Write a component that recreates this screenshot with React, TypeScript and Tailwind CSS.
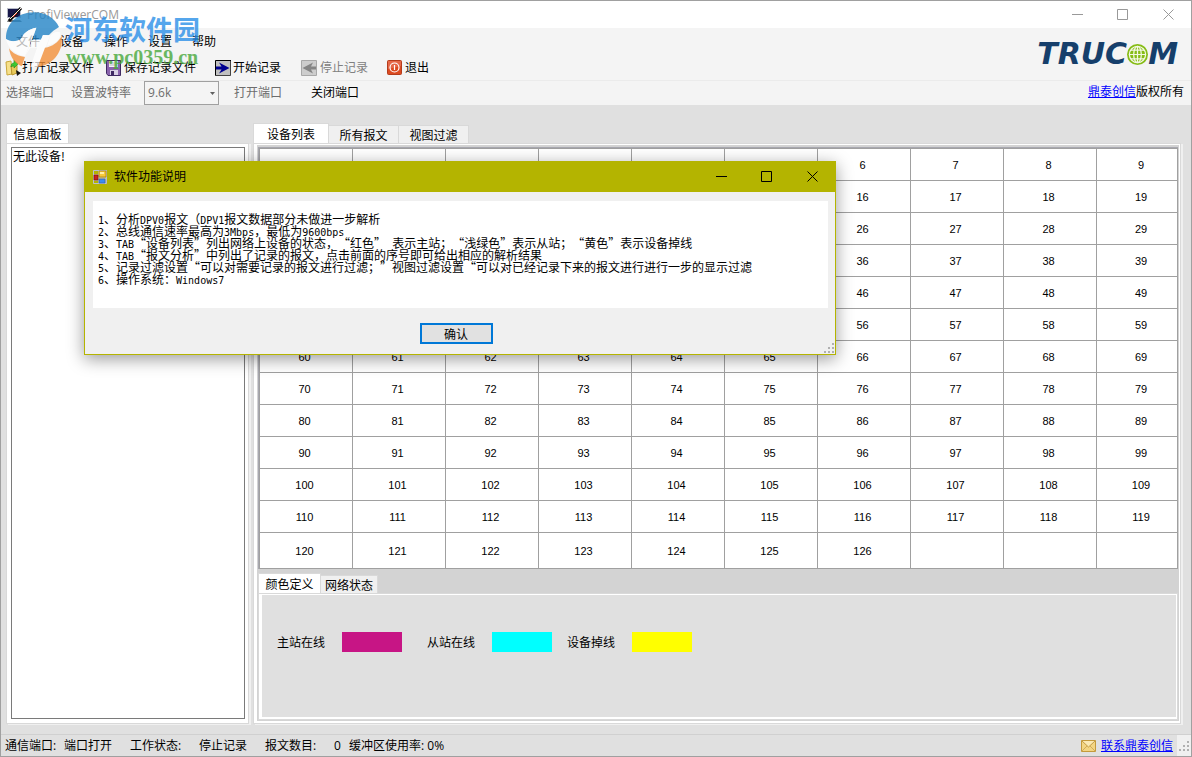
import React, { useState } from 'react';

const UI_FONT = "font-['Open_Sans','Noto_Sans_CJK_SC',sans-serif]";
const SONG_FONT = "font-['Noto_Sans_CJK_SC',sans-serif]";

const helpLines = [
  '1、分析DPV0报文（DPV1报文数据部分未做进一步解析',
  '2、总线通信速率最高为3Mbps，最低为9600bps',
  '3、TAB“设备列表”列出网络上设备的状态，“红色” 表示主站；“浅绿色”表示从站；“黄色”表示设备掉线',
  '4、TAB“报文分析”中列出了记录的报文，点击前面的序号即可给出相应的解析结果',
  '5、记录过滤设置“可以对需要记录的报文进行过滤；”视图过滤设置“可以对已经记录下来的报文进行进行一步的显示过滤',
  '6、操作系统：Windows7',
];

const legend = [
  { label: '主站在线', color: 'bg-[#c71585]', gap: 'mr-[25px]' },
  { label: '从站在线', color: 'bg-[#00ffff]', gap: 'mr-[15px]' },
  { label: '设备掉线', color: 'bg-[#ffff00]', gap: '' },
];

// Latin runs take half the width of a Chinese character
function MixedText({ text }: { text: string }) {
  return (
    <>
      {text.split(/([\x20-\x7e]+)/).map((part, i) =>
        i % 2 ? <span key={i} className="font-['DejaVu_Sans_Mono',monospace] text-[10px]">{part}</span> : part
      )}
    </>
  );
}

function WindowButtons({ className }: { className: string }) {
  return (
    <div className={`flex ${className}`}>
      <button aria-label="最小化" className="w-[46px] h-7 flex items-center justify-center">
        <svg width="11" height="11" stroke="currentColor" fill="none"><path d="M0 5.5h11" /></svg>
      </button>
      <button aria-label="最大化" className="w-[45px] h-7 flex items-center justify-center">
        <svg width="11" height="11" stroke="currentColor" fill="none"><path d="M.5 .5h10v10h-10z" /></svg>
      </button>
      <button aria-label="关闭" className="w-[46px] h-7 flex items-center justify-center">
        <svg width="11" height="11" stroke="currentColor" fill="none"><path d="M.5 .5l10 10M10.5 .5l-10 10" /></svg>
      </button>
    </div>
  );
}

function AppIcon() {
  return (
    <svg width="16" height="16" viewBox="0 0 16 16">
      <path d="M0 1h14v10H0z" fill="#b8bcc8" />
      <path d="M1 2h12v8H1z" fill="#18184a" />
      <path d="M1 13h12l2 2H0z" fill="#777" />
      <path d="M2 14L14 1" stroke="#111" strokeWidth="3" />
      <path d="M3 12L14 1" stroke="#f3e8e0" strokeWidth="1" />
      <path d="M6 10l4-4" stroke="#e03020" strokeWidth="1" />
    </svg>
  );
}

function OpenIcon() {
  return (
    <svg width="16" height="16" viewBox="0 0 16 16">
      <path d="M1 2l5-1 1 13-5 1z" fill="#f6e08a" stroke="#c9a83c" />
      <path d="M6 6l6-1v8l-5 2z" fill="#e8c95a" stroke="#b8942c" />
      <path d="M6 7c0-3 1-4 3-4V0l4 4-4 4V6c-1 0-2 0-3 1z" fill="#3cc832" stroke="#1c8a1c" strokeWidth=".6" />
      <path d="M11 10l5 3-4 3z" fill="#111" />
    </svg>
  );
}

function SaveIcon() {
  return (
    <svg width="16" height="16" viewBox="0 0 16 16">
      <path d="M.5 .5h14v15H2l-1.500-2z" fill="#8a63ad" stroke="#3f2a63" />
      <path d="M3 1h9v6H3z" fill="#f4f4f8" />
      <path d="M3.500 3h8M3.500 5h8" stroke="#b4b4c4" />
      <path d="M4 10h8v5H4z" fill="#d8d0e4" />
      <path d="M5 11h3v4H5z" fill="#3f2a63" />
    </svg>
  );
}

function StartIcon() {
  return (
    <svg width="16" height="16" viewBox="0 0 16 16">
      <path d="M0 0h16v16H0z" fill="#c0c0c0" />
      <path d="M.5 16V.5H16" stroke="#000" fill="none" />
      <path d="M0 15.500h15.500V1" stroke="#444" fill="none" />
      <path d="M4 2.500L14.500 8 4 13.500 6.500 9.500H1v-3h5.500z" fill="#000090" />
    </svg>
  );
}

function StopIcon() {
  return (
    <svg width="16" height="16" viewBox="0 0 16 16">
      <path d="M.5 .5h15v15H.5z" fill="#cdcdcd" stroke="#a8a8a8" />
      <path d="M12 2.500L1.500 8 12 13.500 10 9.500h5v-3h-5z" fill="#858585" />
    </svg>
  );
}

function ExitIcon() {
  return (
    <svg width="16" height="16" viewBox="0 0 16 16">
      <rect x=".5" y=".5" width="14" height="14" rx="1" fill="#dc4a20" stroke="#b43c1c" />
      <path d="M1 1h13v5L1 9z" fill="#e8755a" opacity=".7" />
      <circle cx="7.500" cy="7.500" r="4.500" fill="none" stroke="#fff" strokeWidth="1.200" />
      <path d="M7.500 5v5" stroke="#fff" strokeWidth="1.200" />
    </svg>
  );
}

function FormIcon() {
  return (
    <svg width="14" height="14" viewBox="0 0 14 14">
      <path d="M.5 .5h13v13H.5z" fill="#c8c49a" stroke="#b9bdd0" />
      <path d="M1 1h4v3H1zM1 11h4v2H1z" fill="#b4b400" />
      <path d="M6 1h7v6H6z" fill="#f7c93c" stroke="#a87800" strokeWidth=".7" />
      <path d="M7 2h4v2H7z" fill="#fff0a8" />
      <path d="M1 5h4v5H1z" fill="#c8241c" stroke="#7a1010" strokeWidth=".7" />
      <path d="M6 9h6v4H6z" fill="#3c8cf0" stroke="#3060b0" strokeWidth=".7" />
    </svg>
  );
}

function MailIcon() {
  return (
    <svg width="16" height="12" viewBox="0 0 16 12">
      <path d="M.5 .5h14v11H.5z" fill="#f3d583" stroke="#c49a3c" />
      <path d="M1 1l6.500 6L14 1" fill="#fbe9b4" stroke="#b58a30" strokeWidth=".8" />
      <path d="M1 11l5-5M14 11L9 6" stroke="#c8a04c" strokeWidth=".8" />
    </svg>
  );
}

function Grip() {
  return (
    <svg width="11" height="11" viewBox="0 0 11 11" fill="#b0b0b0">
      <path d="M8 0h2v2H8zM4 4h2v2H4zM8 4h2v2H8zM0 8h2v2H0zM4 8h2v2H4zM8 8h2v2H8z" />
    </svg>
  );
}

function Globe() {
  return (
    <svg width="21" height="21" viewBox="0 0 22 22">
      <circle cx="11" cy="11" r="11" fill="#86bc16" />
      <g fill="none" stroke="#f4f8e4" strokeWidth="1.300">
        <ellipse cx="11" cy="11" rx="4" ry="8.500" />
        <circle cx="11" cy="11" r="8.500" />
        <path d="M11 2.500v17M2 11h18M4 6.500h14M4 15.500h14" />
      </g>
    </svg>
  );
}

function Watermark() {
  return (
    <div className="absolute left-1 top-2.5 flex gap-0.5 pointer-events-none opacity-80">
      <svg width="58" height="58" viewBox="0 0 174 174">
        <path d="M3 84C2 38 38 4 86 4c36 0 64 18 76 44-10 6-22 14-32 26l-16-2-6 14H82l12-36c-22 4-40 16-46 34C34 92 18 94 3 84z" fill="#2484c6" />
        <path d="M3 84c15 10 31 8 45 0 6-18 24-30 46-34L60 136C30 130 8 112 3 84z" fill="#fff" opacity=".9" />
        <path d="M12 112c12 16 28 24 48 26l-10 28c-20-8-34-26-38-54z" fill="#f3913a" />
        <path d="M82 86h26l6-14h22l-36 96H76l20-58H76l-16 26z" fill="#fff" opacity=".9" />
        <path d="M170 74c6 46-24 88-72 94l22-58c22-4 40-16 50-36z" fill="#f3913a" />
        <path d="M126 104l10-30c8-10 20-14 30-10 2 20-14 36-40 40z" fill="#fff" opacity=".9" />
      </svg>
      <div>
        <p className="font-['Noto_Sans_CJK_SC',sans-serif] font-bold text-[27px] leading-9 text-[#2b90e8]">河东软件园</p>
        <p className="pl-px font-['Liberation_Serif',serif] font-bold text-[20px] leading-5 text-[#48a83c]">www.pc0359.cn</p>
      </div>
    </div>
  );
}

function DeviceTable() {
  return (
    <table className="w-full table-fixed border-collapse bg-white font-['Liberation_Sans',sans-serif] text-[11px] leading-3 text-center">
      <colgroup>
        {Array.from({ length: 9 }, (_, c) => <col key={c} className="w-[93px]" />)}
        <col />
      </colgroup>
      <tbody>
        {Array.from({ length: 13 }, (_, r) => (
          <tr key={r} className="h-8 last:h-9">
            {Array.from({ length: 10 }, (_, c) => {
              const address = r * 10 + c;
              return (
                <td key={c} className="border border-[#a0a0a0] p-0 pr-[3px] last:pr-0 last:pl-2">{address <= 126 ? address : ''}</td>
              );
            })}
          </tr>
        ))}
      </tbody>
    </table>
  );
}

function HelpDialog({ onClose }: { onClose: () => void }) {
  return (
    <div role="dialog" aria-labelledby="help-title" className="absolute left-[83px] top-40 w-[752px] bg-[#f0f0f0] border border-[#b4b400] shadow-[0_4px_16px_rgba(0,0,0,0.4)]">
      <div className="h-[30px] bg-[#b4b400] pl-2 flex items-center">
        <FormIcon />
        <h2 id="help-title" className={`ml-[7px] flex-1 text-xs ${UI_FONT}`}>软件功能说明</h2>
        <WindowButtons className="text-black -mt-0.5" />
      </div>
      <div className="mt-[9px] ml-2 mr-[7px] h-[107px] bg-white pl-[5px] pt-3 text-xs leading-3 whitespace-pre [text-spacing-trim:space-all]">
        {helpLines.map(line => <p key={line} className="h-3"><MixedText text={line} /></p>)}
      </div>
      <div className="h-[46px] pt-[15px] flex justify-center relative">
        <button onClick={onClose} className="w-[73px] h-[21px] mr-2 bg-[#e1e1e1] border-2 border-[#0078d7] text-xs leading-3">确认</button>
        <div className="absolute right-0 bottom-0"><Grip /></div>
      </div>
    </div>
  );
}

export default function App() {
  const [showHelp, setShowHelp] = useState(true);

  return (
    <div lang="zh-CN" className={`relative min-h-screen flex flex-col overflow-hidden bg-[#e0e0e0] border border-[#a0a0a0] text-black text-xs ${SONG_FONT}`}>
      <header className={UI_FONT}>
        <div className="h-[27px] bg-white flex items-center pl-1.5">
          <AppIcon />
          <h1 className="ml-1 flex-1 text-[#999999]">ProfiViewerCOM</h1>
          <WindowButtons className="text-[#999999]" />
        </div>
        <div className="bg-[#f4f4f4] flex justify-between">
          <div>
            <nav className="h-[27px] pt-px pl-[15px] flex items-center gap-5">
              {['文件', '设备', '操作', '设置', '帮助'].map(item => <button key={item}>{item}</button>)}
            </nav>
            <div className="h-[25px] pl-1 flex items-center">
              <button className="flex items-center gap-px mr-3"><OpenIcon />打开记录文件</button>
              <button className="flex items-center gap-0.5 mr-[19px]"><SaveIcon />保存记录文件</button>
              <button className="flex items-center gap-0.5 mr-5"><StartIcon />开始记录</button>
              <button disabled className="flex items-center gap-[3px] mr-[19px] text-[#808080]"><StopIcon />停止记录</button>
              <button className="flex items-center gap-0.5"><ExitIcon />退出</button>
            </div>
          </div>
          <div className="flex items-center mr-[13px] font-['DejaVu_Sans',sans-serif] font-bold italic text-[30px] leading-7 text-[#163f6b]">
            TRUC<Globe />M
          </div>
        </div>
        <div className="h-[25px] bg-[#f4f4f4] border-t border-[#ebebeb] pl-[5px] pr-[7px] flex items-center text-[#6d6d6d]">
          <span>选择端口</span>
          <label htmlFor="baud" className="ml-[17px]">设置波特率</label>
          <div className="relative ml-[13px]">
            <select id="baud" disabled defaultValue="9.6k" className="block appearance-none w-[75px] h-6 border border-[#a0a0a0] bg-[#f4f4f4] pl-[3px]">
              <option>9.6k</option>
            </select>
            <svg className="absolute right-1 top-[11px]" width="5" height="3" fill="#606060"><path d="M0 0h5L2.500 3z" /></svg>
          </div>
          <button disabled className="ml-[15px]">打开端口</button>
          <button className="ml-[29px] text-black">关闭端口</button>
          <p className={`ml-auto -mt-1 text-black ${SONG_FONT}`}><a href="#" className="text-[#0000ff] underline">鼎泰创信</a>版权所有</p>
        </div>
      </header>

      <main className="flex-1 flex gap-1 pt-[18px] pl-[5px] pr-2 pb-2.5">
        <section className="w-[243px] flex flex-col">
          <div className="flex">
            <label htmlFor="info" className="w-[63px] h-5 bg-white border border-b-0 border-[#d9d9d9] flex items-center justify-center leading-3">信息面板</label>
          </div>
          <div className="flex-1 flex bg-white border border-[#d9d9d9] shadow-[2px_1px_0_#f0f0f0] pt-[3px] pl-1 pr-[3px] pb-1">
            <textarea id="info" readOnly defaultValue="无此设备!" className="flex-1 min-w-0 resize-none border border-[#7a7a7a] px-px leading-4 outline-none" />
          </div>
        </section>

        <section className="flex-1 min-w-0 flex flex-col">
          <div className="flex items-end">
            <button className="w-[76px] h-5 bg-white border border-b-0 border-[#d9d9d9] leading-3">设备列表</button>
            <button className="w-[70px] h-[18px] bg-[#f0f0f0] border border-l-0 border-b-0 border-[#d9d9d9] leading-3">所有报文</button>
            <button className="w-[70px] h-[18px] bg-[#f0f0f0] border border-l-0 border-b-0 border-[#d9d9d9] leading-3">视图过滤</button>
          </div>
          <div className="flex-1 flex flex-col bg-white border border-[#d9d9d9] shadow-[2px_1px_0_#f0f0f0] pt-px pl-[3px] pr-px pb-0.5 mr-0.5">
            <div className="flex-1 flex flex-col bg-[#d3d3d3] pl-px pr-px pt-0.5 pb-px">
              <div className="border-t border-l border-[#a8a8b0]"><DeviceTable /></div>
              <div className="flex items-end mt-1">
                <button className="w-[63px] h-5 bg-white border border-b-0 border-[#d9d9d9] leading-3">颜色定义</button>
                <button className="w-[57px] h-[18px] bg-[#f0f0f0] border border-l-0 border-b-0 border-[#d9d9d9] leading-3">网络状态</button>
              </div>
              <div className="flex-1 border border-[#d9d9d9] bg-white pl-[3px] pt-px pr-px pb-0.5">
                <div className="h-full bg-[#e0e0e0] pl-[15px] pt-[37px] flex items-start">
                  {legend.map(item => (
                    <div key={item.label} className={`flex items-center ${item.gap}`}>
                      <span>{item.label}</span>
                      <span className={`w-[60px] h-5 ml-[17px] ${item.color}`} />
                    </div>
                  ))}
                </div>
              </div>
            </div>
          </div>
        </section>
      </main>

      <footer className={`h-[22px] border-t border-[#d0d0d0] bg-[#e0e0e0] pl-1 flex items-center leading-4 ${UI_FONT}`}>
        <span className="w-[59px]">通信端口:</span>
        <span className="w-[66px]">端口打开</span>
        <span className="w-[69px]">工作状态:</span>
        <span className="w-[66px]">停止记录</span>
        <span className="w-[69px]">报文数目:</span>
        <span className="w-[15px]">0</span>
        <span>缓冲区使用率: 0%</span>
        <div className="ml-auto flex items-center gap-1">
          <MailIcon />
          <a href="#" className="text-[#0000ff] underline">联系鼎泰创信</a>
        </div>
        <div className="ml-1 self-stretch bg-[#f0f0f0] pl-0.5 pr-px flex items-end pb-1"><Grip /></div>
      </footer>

      <Watermark />
      {showHelp && <HelpDialog onClose={() => setShowHelp(false)} />}
    </div>
  );
}
